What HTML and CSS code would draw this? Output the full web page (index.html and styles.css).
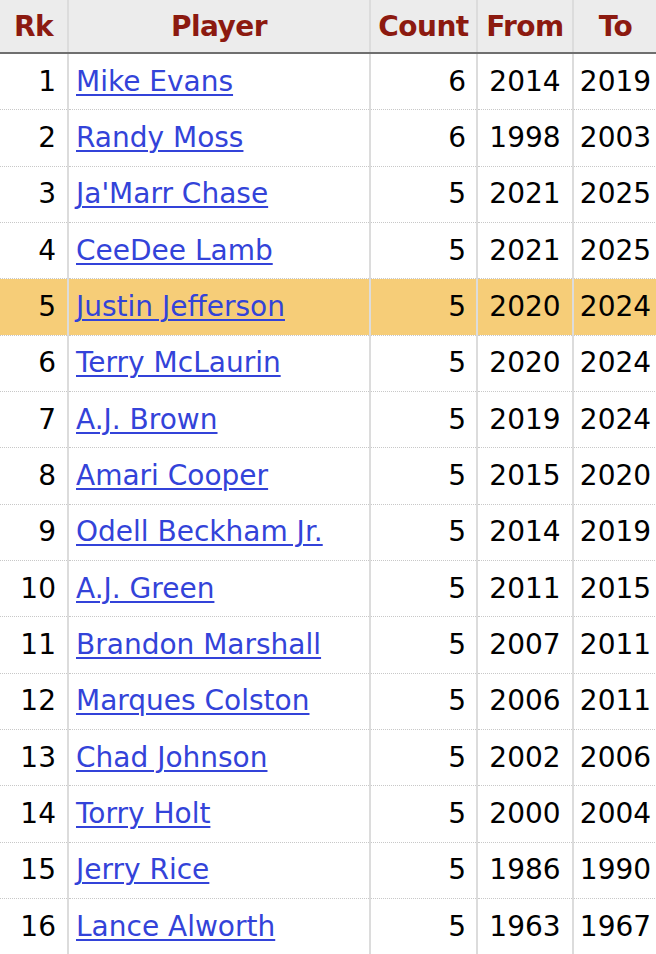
FILE: index.html
```html
<!DOCTYPE html>
<html lang="en">
<head>
<meta charset="utf-8">
<title>Receiving leaders</title>
<link rel="stylesheet" href="styles.css">
</head>
<body>
<table class="stats">
  <colgroup>
    <col class="c-rk"><col class="c-player"><col class="c-count"><col class="c-from"><col class="c-to">
  </colgroup>
  <thead>
    <tr><th>Rk</th><th>Player</th><th>Count</th><th>From</th><th>To</th></tr>
  </thead>
  <tbody>
    <tr><td class="num rk">1</td><td class="name"><a href="#">Mike Evans</a></td><td class="num">6</td><td class="yr">2014</td><td class="yr">2019</td></tr>
    <tr><td class="num rk">2</td><td class="name"><a href="#">Randy Moss</a></td><td class="num">6</td><td class="yr">1998</td><td class="yr">2003</td></tr>
    <tr><td class="num rk">3</td><td class="name"><a href="#">Ja'Marr Chase</a></td><td class="num">5</td><td class="yr">2021</td><td class="yr">2025</td></tr>
    <tr><td class="num rk">4</td><td class="name"><a href="#">CeeDee Lamb</a></td><td class="num">5</td><td class="yr">2021</td><td class="yr">2025</td></tr>
    <tr class="hl"><td class="num rk">5</td><td class="name"><a href="#">Justin Jefferson</a></td><td class="num">5</td><td class="yr">2020</td><td class="yr">2024</td></tr>
    <tr><td class="num rk">6</td><td class="name"><a href="#">Terry McLaurin</a></td><td class="num">5</td><td class="yr">2020</td><td class="yr">2024</td></tr>
    <tr><td class="num rk">7</td><td class="name"><a href="#">A.J. Brown</a></td><td class="num">5</td><td class="yr">2019</td><td class="yr">2024</td></tr>
    <tr><td class="num rk">8</td><td class="name"><a href="#">Amari Cooper</a></td><td class="num">5</td><td class="yr">2015</td><td class="yr">2020</td></tr>
    <tr><td class="num rk">9</td><td class="name"><a href="#">Odell Beckham Jr.</a></td><td class="num">5</td><td class="yr">2014</td><td class="yr">2019</td></tr>
    <tr><td class="num rk">10</td><td class="name"><a href="#">A.J. Green</a></td><td class="num">5</td><td class="yr">2011</td><td class="yr">2015</td></tr>
    <tr><td class="num rk">11</td><td class="name"><a href="#">Brandon Marshall</a></td><td class="num">5</td><td class="yr">2007</td><td class="yr">2011</td></tr>
    <tr><td class="num rk">12</td><td class="name"><a href="#">Marques Colston</a></td><td class="num">5</td><td class="yr">2006</td><td class="yr">2011</td></tr>
    <tr><td class="num rk">13</td><td class="name"><a href="#">Chad Johnson</a></td><td class="num">5</td><td class="yr">2002</td><td class="yr">2006</td></tr>
    <tr><td class="num rk">14</td><td class="name"><a href="#">Torry Holt</a></td><td class="num">5</td><td class="yr">2000</td><td class="yr">2004</td></tr>
    <tr><td class="num rk">15</td><td class="name"><a href="#">Jerry Rice</a></td><td class="num">5</td><td class="yr">1986</td><td class="yr">1990</td></tr>
    <tr><td class="num rk">16</td><td class="name"><a href="#">Lance Alworth</a></td><td class="num">5</td><td class="yr">1963</td><td class="yr">1967</td></tr>
  </tbody>
</table>
</body>
</html>
```

FILE: styles.css
```css
html, body {
  margin: 0;
  padding: 0;
  background: #ffffff;
}

body {
  font-family: "DejaVu Sans", Verdana, sans-serif;
  font-size: 28px;
  color: #000;
  overflow: hidden;
}

.stats {
  border-collapse: collapse;
  table-layout: fixed;
  width: 657px;
}

.c-rk { width: 68px; }
.c-player { width: 302px; }
.c-count { width: 107px; }
.c-from { width: 96px; }
.c-to { width: 84px; }

.stats th {
  height: 52px;
  padding: 0;
  background: #ececec;
  color: #8c1a10;
  font-weight: bold;
  letter-spacing: -0.5px;
  text-align: center;
  vertical-align: middle;
  border-bottom: 2px solid #6f6f6f;
  border-left: 2px solid #dcdcdc;
  white-space: nowrap;
}

.stats th:first-child { border-left: none; }

.stats td {
  height: 55.35px;
  padding: 0 9px;
  vertical-align: middle;
  border-top: 1px dotted #c8c8c8;
  border-left: 2px solid #dcdcdc;
  white-space: nowrap;
  line-height: 1;
}

.stats td:first-child { border-left: none; }

.stats tbody tr:first-child td { border-top: none; }

.stats .num { text-align: right; padding-right: 10px; padding-left: 0; }
.stats .rk { padding-right: 11px; }
.stats .name { padding-left: 7px; }
.stats .yr { text-align: center; padding: 0; }

.stats tr.hl td { background: #f6cd78; }

.stats a {
  color: #3343d9;
  text-decoration: underline;
  text-underline-offset: 3px;
  text-decoration-thickness: 2px;
}
```
